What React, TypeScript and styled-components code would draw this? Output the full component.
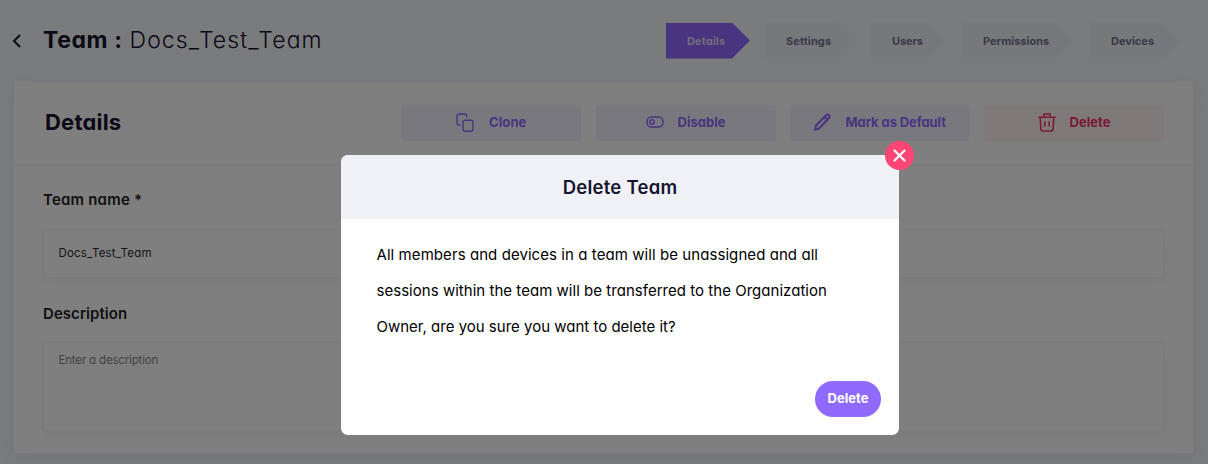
import React from "react";
import styled, { createGlobalStyle } from "styled-components";

const Global = createGlobalStyle`
  * { box-sizing: border-box; }
  html, body { margin: 0; height: 100%; overflow: hidden; }
  body {
    font-family: Inter, "Open Sans", sans-serif;
    font-feature-settings: "cv11" 1;
    background: #f4f7fb;
    color: #14122b;
  }
  button, input, textarea { font: inherit; font-feature-settings: inherit; }
`;

const Label = styled.span<{ $track?: number }>`
  letter-spacing: ${(p) => p.$track ?? 0}px;
  white-space: nowrap;
`;

const Page = styled.div`
  width: 1208px;
  height: 464px;
  padding: 0 14px 0 13px;
  display: flex;
  flex-direction: column;
  overflow: hidden;
`;

const TopBar = styled.header`
  height: 81px;
  flex: none;
  display: flex;
  align-items: center;
  justify-content: space-between;
  padding-right: 14px;
`;

const Heading = styled.h1`
  margin: 0 0 1px;
  display: flex;
  align-items: center;
  font-size: 23px;
  line-height: 30px;
  font-weight: 650;
`;

const Back = styled.svg`
  margin: 1px 22px 0 -1px;
`;

const TeamName = styled.span`
  margin-left: 7px;
  font-weight: 300;
  letter-spacing: 1.1px;
`;

const Steps = styled.nav`
  display: flex;
  gap: 15px;
`;

const Step = styled.div<{ $w: number; $active?: boolean }>`
  width: ${(p) => p.$w}px;
  height: 36px;
  padding-left: 21px;
  display: flex;
  align-items: center;
  font-size: 11px;
  font-weight: 700;
  color: ${(p) => (p.$active ? "#e0d8f8" : "#747290")};
  background: ${(p) => (p.$active ? "#9069ff" : "#eff1f7")};
  clip-path: polygon(0 0, calc(100% - 18px) 0, 100% 50%, calc(100% - 18px) 100%, 0 100%);
`;

const Card = styled.main`
  height: 373px;
  flex: none;
  background: #fff;
  border: 1px solid #eef2fb;
  border-radius: 3px;
  box-shadow: 0 6px 20px rgba(60, 60, 110, 0.08);
`;

const CardHead = styled.div`
  height: 84px;
  border-bottom: 2px solid #f4f4f8;
  padding: 0 29px 1px 31px;
  display: flex;
  align-items: center;
  justify-content: space-between;
`;

const CardTitle = styled.h2`
  margin: 0 0 2px;
  font-size: 22px;
  font-weight: 650;
`;

const Actions = styled.div`
  display: flex;
  gap: 14.25px;
`;

const Action = styled.button<{ $danger?: boolean; $gap: number }>`
  width: 180px;
  height: 36px;
  padding: 0 0 1px;
  border: 0;
  border-radius: 3px;
  display: flex;
  align-items: center;
  justify-content: center;
  gap: ${(p) => p.$gap}px;
  font-size: 13px;
  font-weight: 650;
  color: ${(p) => (p.$danger ? "#f5336c" : "#9069ff")};
  background: ${(p) => (p.$danger ? "#fff2f4" : "#f4f1ff")};
`;

const Form = styled.form`
  padding: 21px 29px 0;
`;

const FieldLabel = styled.label`
  display: block;
  height: 26px;
  line-height: 26px;
  font-size: 15px;
  font-weight: 600;
  color: #232327;
`;

const fieldBox = `
  display: block;
  width: 100%;
  border: 1px solid #f1f2f6;
  border-radius: 3px;
  background: #fff;
  box-shadow: 0 5px 12px rgba(40, 40, 70, 0.04);
  padding: 0 14.5px;
  font-size: 11.5px;
  outline: none;
  resize: none;
`;

const Input = styled.input`
  ${fieldBox}
  height: 49px;
  margin: 16px 0 23px;
  padding-bottom: 1px;
  letter-spacing: 0.2px;
  color: #2b2b31;
`;

const TextArea = styled.textarea`
  ${fieldBox}
  height: 90px;
  margin-top: 15px;
  padding-top: 10px;
  letter-spacing: -0.17px;
  &::placeholder { color: #86868b; opacity: 1; }
`;

const Overlay = styled.div`
  position: fixed;
  inset: 0;
  background: rgba(0, 0, 0, 0.5);
  display: flex;
  justify-content: center;
  align-items: flex-start;
  padding: 155px 0 0 32px;
`;

const Dialog = styled.section`
  position: relative;
  width: 558px;
  height: 279.5px;
  border-radius: 7px;
  background: #fff;
`;

const DialogHead = styled.h3`
  margin: 0;
  height: 63.5px;
  border-radius: 7px 7px 0 0;
  background: #f0f1f6;
  display: flex;
  align-items: center;
  justify-content: center;
  font-size: 18.5px;
  font-weight: 600;
  color: #17142f;
`;

const DialogBody = styled.p`
  margin: 0;
  padding: 18.5px 35px 0 35.5px;
  display: flex;
  flex-direction: column;
  font-size: 15px;
  line-height: 36px;
  color: #000;
`;

const DialogFoot = styled.footer`
  padding: 35.5px 18px 0;
  display: flex;
  justify-content: flex-end;
`;

const Confirm = styled.button`
  width: 66px;
  height: 36px;
  padding: 0 0 1px;
  border: 0;
  border-radius: 18px;
  background: #9069ff;
  color: #fff;
  font-size: 13px;
  font-weight: 650;
`;

const Close = styled.button`
  position: absolute;
  top: -14px;
  right: -15px;
  width: 29px;
  height: 29px;
  padding: 0;
  border: 0;
  border-radius: 50%;
  background: #ff4576;
  display: grid;
  place-items: center;
`;

const CloneIcon = () => (
  <svg width="18" height="19" viewBox="0 0 18 19" fill="none" stroke="currentColor" strokeWidth="1.4">
    <rect x="7" y="7.2" width="10" height="11" rx="2" />
    <path d="M4.3 12H3.2a2.2 2.2 0 0 1-2.2-2.2V3.2A2.2 2.2 0 0 1 3.2 1h5.3a2.2 2.2 0 0 1 2.2 2.2v1" />
  </svg>
);

const ToggleIcon = () => (
  <svg width="18" height="12" viewBox="0 0 18 12" fill="none" stroke="currentColor" strokeWidth="1.5">
    <rect x="1" y="1" width="16" height="10" rx="4.6" />
    <circle cx="6" cy="6" r="2.2" />
  </svg>
);

const PencilIcon = () => (
  <svg width="17" height="18" viewBox="0 0 17 18" fill="none" stroke="currentColor" strokeWidth="2" strokeLinejoin="round">
    <path d="M1.2 16.7 2 12.5 12.2 2.2a1.9 1.9 0 0 1 2.8 0 1.9 1.9 0 0 1 0 2.8L5 15.5Z" />
    <path d="m10.8 4.2 2.4 2.4" />
  </svg>
);

const TrashIcon = () => (
  <svg width="18" height="19" viewBox="0 0 18 19" fill="none" stroke="currentColor" strokeWidth="1.6">
    <path d="M.3 4.3h17.4M5.5 4.2 6.2 1h5.6l.7 3.2M2.2 4.5l.7 11.7A2 2 0 0 0 4.9 18h8.2a2 2 0 0 0 2-1.8l.7-11.7M6.8 8.3v5.2M11.2 8.3v5.2" />
  </svg>
);

export default function App() {
  return (
    <>
      <Global />
      <Page>
        <TopBar>
          <Heading>
            <Back width="9" height="14" viewBox="0 0 9 14" fill="none" stroke="#14122b" strokeWidth="2">
              <path d="M8 1 2 7l6 6" />
            </Back>
            <Label $track={0.6}>Team :</Label>
            <TeamName>Docs_Test_Team</TeamName>
          </Heading>
          <Steps>
            <Step $w={84} $active><Label $track={0.1}>Details</Label></Step>
            <Step $w={91}><Label $track={0.1}>Settings</Label></Step>
            <Step $w={76}><Label $track={-0.1}>Users</Label></Step>
            <Step $w={113}><Label>Permissions</Label></Step>
            <Step $w={90}><Label>Devices</Label></Step>
          </Steps>
        </TopBar>
        <Card>
          <CardHead>
            <CardTitle><Label $track={0.2}>Details</Label></CardTitle>
            <Actions>
              <Action $gap={15}><CloneIcon /><Label $track={0.1}>Clone</Label></Action>
              <Action $gap={14}><ToggleIcon /><Label>Disable</Label></Action>
              <Action $gap={15}><PencilIcon /><Label $track={-0.1}>Mark as Default</Label></Action>
              <Action $gap={14} $danger><TrashIcon /><Label>Delete</Label></Action>
            </Actions>
          </CardHead>
          <Form>
            <FieldLabel><Label $track={0.2}>Team name *</Label></FieldLabel>
            <Input defaultValue="Docs_Test_Team" />
            <FieldLabel><Label $track={0.05}>Description</Label></FieldLabel>
            <TextArea placeholder="Enter a description" />
          </Form>
        </Card>
      </Page>
      <Overlay>
        <Dialog role="dialog">
          <DialogHead><Label $track={0.25}>Delete Team</Label></DialogHead>
          <DialogBody>
            <Label $track={0.07}>All members and devices in a team will be unassigned and all</Label>
            <Label $track={0.03}>sessions within the team will be transferred to the Organization</Label>
            <Label>Owner, are you sure you want to delete it?</Label>
          </DialogBody>
          <DialogFoot>
            <Confirm><Label>Delete</Label></Confirm>
          </DialogFoot>
          <Close aria-label="Close">
            <svg width="13" height="13" viewBox="0 0 13 13" stroke="#fff" strokeWidth="2.2" strokeLinecap="round">
              <path d="M1.5 1.5l10 10M11.5 1.5l-10 10" />
            </svg>
          </Close>
        </Dialog>
      </Overlay>
    </>
  );
}
